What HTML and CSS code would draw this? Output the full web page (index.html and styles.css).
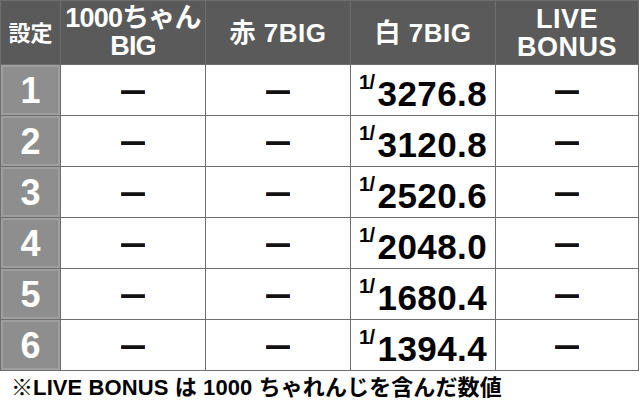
FILE: index.html
```html
<!DOCTYPE html>
<html lang="ja">
<head>
<meta charset="utf-8">
<link rel="stylesheet" href="styles.css">
</head>
<body>
<div class="sheet">
  <div class="grid">
    <div class="hd hd-set">設定</div>
    <div class="hd hd-big"><span>1000ちゃん</span><span>BIG</span></div>
    <div class="hd">赤 7BIG</div>
    <div class="hd">白 7BIG</div>
    <div class="hd hd-two"><span>LIVE</span><span>BONUS</span></div>

    <div class="lab">1</div><div class="cell"><span class="dash">—</span></div><div class="cell"><span class="dash">—</span></div><div class="cell val"><span class="sup">1/</span><span class="num">3276.8</span></div><div class="cell"><span class="dash">—</span></div>
    <div class="lab">2</div><div class="cell"><span class="dash">—</span></div><div class="cell"><span class="dash">—</span></div><div class="cell val"><span class="sup">1/</span><span class="num">3120.8</span></div><div class="cell"><span class="dash">—</span></div>
    <div class="lab">3</div><div class="cell"><span class="dash">—</span></div><div class="cell"><span class="dash">—</span></div><div class="cell val"><span class="sup">1/</span><span class="num">2520.6</span></div><div class="cell"><span class="dash">—</span></div>
    <div class="lab">4</div><div class="cell"><span class="dash">—</span></div><div class="cell"><span class="dash">—</span></div><div class="cell val"><span class="sup">1/</span><span class="num">2048.0</span></div><div class="cell"><span class="dash">—</span></div>
    <div class="lab">5</div><div class="cell"><span class="dash">—</span></div><div class="cell"><span class="dash">—</span></div><div class="cell val"><span class="sup">1/</span><span class="num">1680.4</span></div><div class="cell"><span class="dash">—</span></div>
    <div class="lab">6</div><div class="cell"><span class="dash">—</span></div><div class="cell"><span class="dash">—</span></div><div class="cell val"><span class="sup">1/</span><span class="num">1394.4</span></div><div class="cell"><span class="dash">—</span></div>
  </div>
  <p class="note">※LIVE BONUS は 1000 ちゃれんじを含んだ数値</p>
</div>
</body>
</html>
```

FILE: styles.css
```css
html, body {
  margin: 0;
  padding: 0;
  background: #ffffff;
}
body {
  width: 640px;
  height: 402px;
  overflow: hidden;
  font-family: "Liberation Sans", "Noto Sans CJK JP", sans-serif;
  font-weight: bold;
}
.sheet {
  display: flex;
  flex-direction: column;
}
.grid {
  display: grid;
  grid-template-columns: 59px 144px 144px 144px 142px;
  grid-template-rows: 63px repeat(6, 50px);
  gap: 1px;
  padding: 1px;
  width: 637px;
  background: #6e6e6e;
}
.hd {
  background: #5a5a5a;
  color: #ffffff;
  display: flex;
  flex-direction: column;
  align-items: center;
  justify-content: center;
  font-size: 26px;
  letter-spacing: 0.5px;
  line-height: 28px;
}
.hd-set {
  font-size: 22px;
  letter-spacing: 0;
  padding-top: 2px;
}
.hd-big {
  font-size: 27px;
  line-height: 28px;
  letter-spacing: -0.8px;
  padding-bottom: 1px;
}
.hd-two {
  font-size: 27px;
  line-height: 28px;
  letter-spacing: 0.5px;
}
.lab {
  background: #8e8e8e;
  box-shadow: inset 0 0 0 2px #9e9e9e;
  color: #ffffff;
  font-size: 36px;
  display: flex;
  align-items: center;
  justify-content: center;
  padding-top: 1px;
}
.cell {
  background: #ffffff;
  display: flex;
  align-items: center;
  justify-content: center;
}
.dash {
  font-size: 24px;
  color: #111;
  transform: scaleY(1.5);
  line-height: 1;
}
.val {
  align-items: flex-start;
  padding-top: 10px;
}
.sup {
  font-size: 20px;
  line-height: 20px;
  letter-spacing: -0.5px;
  margin-right: 3px;
  margin-top: -3px;
  color: #000;
}
.num {
  font-size: 35px;
  line-height: 38px;
  letter-spacing: 0.4px;
  color: #000;
}
.note {
  margin: 4px 0 0 11px;
  font-size: 22px;
  line-height: 26px;
  letter-spacing: 0.1px;
  color: #000;
}
```
